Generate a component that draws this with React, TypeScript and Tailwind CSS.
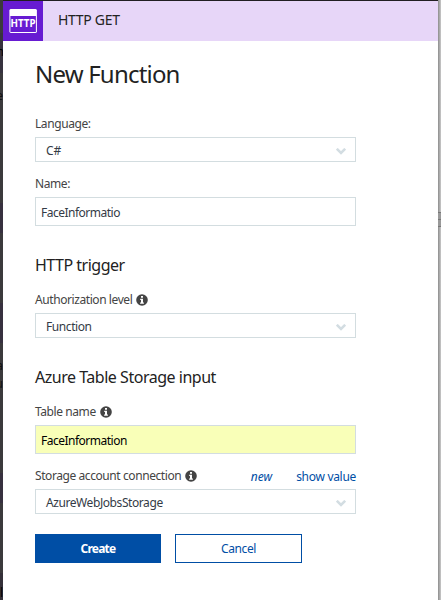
import type { ReactNode } from "react";

function InfoIcon() {
  return (
    <svg className="ml-1 h-3 w-3 shrink-0" viewBox="0 0 12 12">
      <circle cx="6" cy="6" r="5.8" fill="#444444" />
      <path d="M5 2h2v1.7H5zM4.2 4.8H7v3.6h.9v1.3H4.1V8.4H5V6h-.8z" fill="#fff" />
    </svg>
  );
}

function Label({ children, info }: { children: ReactNode; info?: boolean }) {
  return (
    <div className="flex h-4 items-center text-[12px] leading-4 tracking-[-0.42px] text-[#444]">
      <span>{children}</span>
      {info && <InfoIcon />}
    </div>
  );
}

function Select({ value, spacing = "tracking-[-0.42px]" }: { value: string; spacing?: string }) {
  return (
    <div className="flex h-[25px] w-[321px] items-center justify-between border border-[#d3dde0] bg-white pr-[9px] pl-[10px] text-[12px] leading-4 text-[#343b46]">
      <span className={`relative top-px ${spacing}`}>{value}</span>
      <svg className="relative top-[2px] h-[7px] w-[10px]" viewBox="0 0 10 7">
        <path d="M0.8 0.8l4.2 4.2 4.2-4.2" fill="none" stroke="#d3dde2" strokeWidth="2.6" />
      </svg>
    </div>
  );
}

function Input({ value, tone }: { value: string; tone: string }) {
  return (
    <div className={`flex h-[29px] w-[321px] items-center border border-[#d3dde0] pl-[5px] text-[12px] leading-4 tracking-[-0.5px] ${tone}`}>
      <span className="relative top-px">{value}</span>
    </div>
  );
}

export default function App() {
  return (
    <div className="flex h-[600px] w-[441px] flex-col overflow-hidden whitespace-nowrap bg-[#3b3a3b] font-['Noto_Sans','DejaVu_Sans',sans-serif]">
      <div className="flex h-full">
        <aside className="relative w-[3px] shrink-0 overflow-hidden bg-[#3b3a3c] text-[12px] leading-4 text-[#111]">
          <div className="absolute top-[33px] h-10 w-full bg-[#37333f]" />
          <div className="absolute top-[203px] h-[30px] w-full bg-[#37313f]" />
          <div className="absolute top-[303px] h-10 w-full bg-[#37313f]" />
          <div className="absolute top-[473px] h-[30px] w-full bg-[#37313f]" />
          <div className="absolute top-[573px] h-[27px] w-full bg-[#343039]" />
          <span className="absolute top-[44px] -right-px text-black">h</span>
          <span className="absolute top-[88px] right-0">e</span>
          <span className="absolute top-[358px] right-0">a</span>
          <span className="absolute top-[376px] right-0">u</span>
          <span className="absolute top-[585px] left-0 text-black">l</span>
        </aside>
        <main className="w-[435px] shrink-0 border-t border-[#211e22] bg-white">
          <header className="flex h-10 bg-[#e7d6f8]">
            <div className="flex h-10 w-10 items-center justify-center bg-[#671bd2]">
              <svg className="h-6 w-7" viewBox="0 0 28 24">
                <rect x="0.9" y="0.5" width="26.5" height="23" rx="0.5" fill="none" stroke="#fff" />
                <path d="M1 0.5h26V7H1z" fill="#fff" />
                <text x="14" y="18.2" textAnchor="middle" textLength="25" fill="#fff" fontSize="9.8" fontWeight="700">HTTP</text>
              </svg>
            </div>
            <div className="ml-[15px] pt-[9px] text-[14px] leading-5 tracking-[-0.3px] text-[#222]">HTTP GET</div>
          </header>
          <div className="w-[353px] pl-8">
            <h1 className="mt-[17px] h-[31px] text-[24px] leading-8 tracking-[-0.8px] text-[#222]">New Function</h1>
            <div className="mt-[27px]"><Label>Language:</Label></div>
            <div className="mt-[5px]"><Select value="C#" spacing="tracking-normal" /></div>
            <div className="mt-[14px]"><Label>Name:</Label></div>
            <div className="mt-[5px]"><Input value="FaceInformatio" tone="bg-white text-[#343b46]" /></div>
            <h2 className="mt-[29px] h-5 text-[16px] leading-5 tracking-[-0.5px] text-[#222]">HTTP trigger</h2>
            <div className="mt-[17px]"><Label info>Authorization level</Label></div>
            <div className="mt-[5px]"><Select value="Function" /></div>
            <h2 className="mt-[29px] h-5 text-[16px] leading-5 tracking-[-0.48px] text-[#222]">Azure Table Storage input</h2>
            <div className="mt-[17px]"><Label info>Table name</Label></div>
            <div className="mt-[5px]"><Input value="FaceInformation" tone="bg-[#f9ffb8] text-black" /></div>
            <div className="mt-[14px] flex items-center">
              <Label info>Storage account connection</Label>
              <div className="relative top-px ml-auto flex h-4 gap-6 text-[12px] leading-4 text-[#004ea5]">
                <span className="italic">new</span>
                <span className="tracking-[-0.3px]">show value</span>
              </div>
            </div>
            <div className="mt-[5px]"><Select value="AzureWebJobsStorage" /></div>
            <div className="mt-5 flex gap-[14px] text-[12px] leading-4">
              <button className="h-[29px] w-[126px] bg-[#004ea5] font-bold tracking-[-0.8px] text-white">Create</button>
              <button className="h-[29px] w-[127px] border border-[#004ea5] bg-white tracking-[-0.4px] text-[#004ea5]">Cancel</button>
            </div>
          </div>
        </main>
        <aside className="relative w-[3px] shrink-0 bg-linear-to-r from-[#8c8c8c] to-[#cacaca]">
          <div className="absolute top-[212px] h-[15px] w-full border-y border-[#777] bg-[#999]">
            <div className="mt-[6px] h-px bg-[#777]" />
          </div>
        </aside>
      </div>
    </div>
  );
}
